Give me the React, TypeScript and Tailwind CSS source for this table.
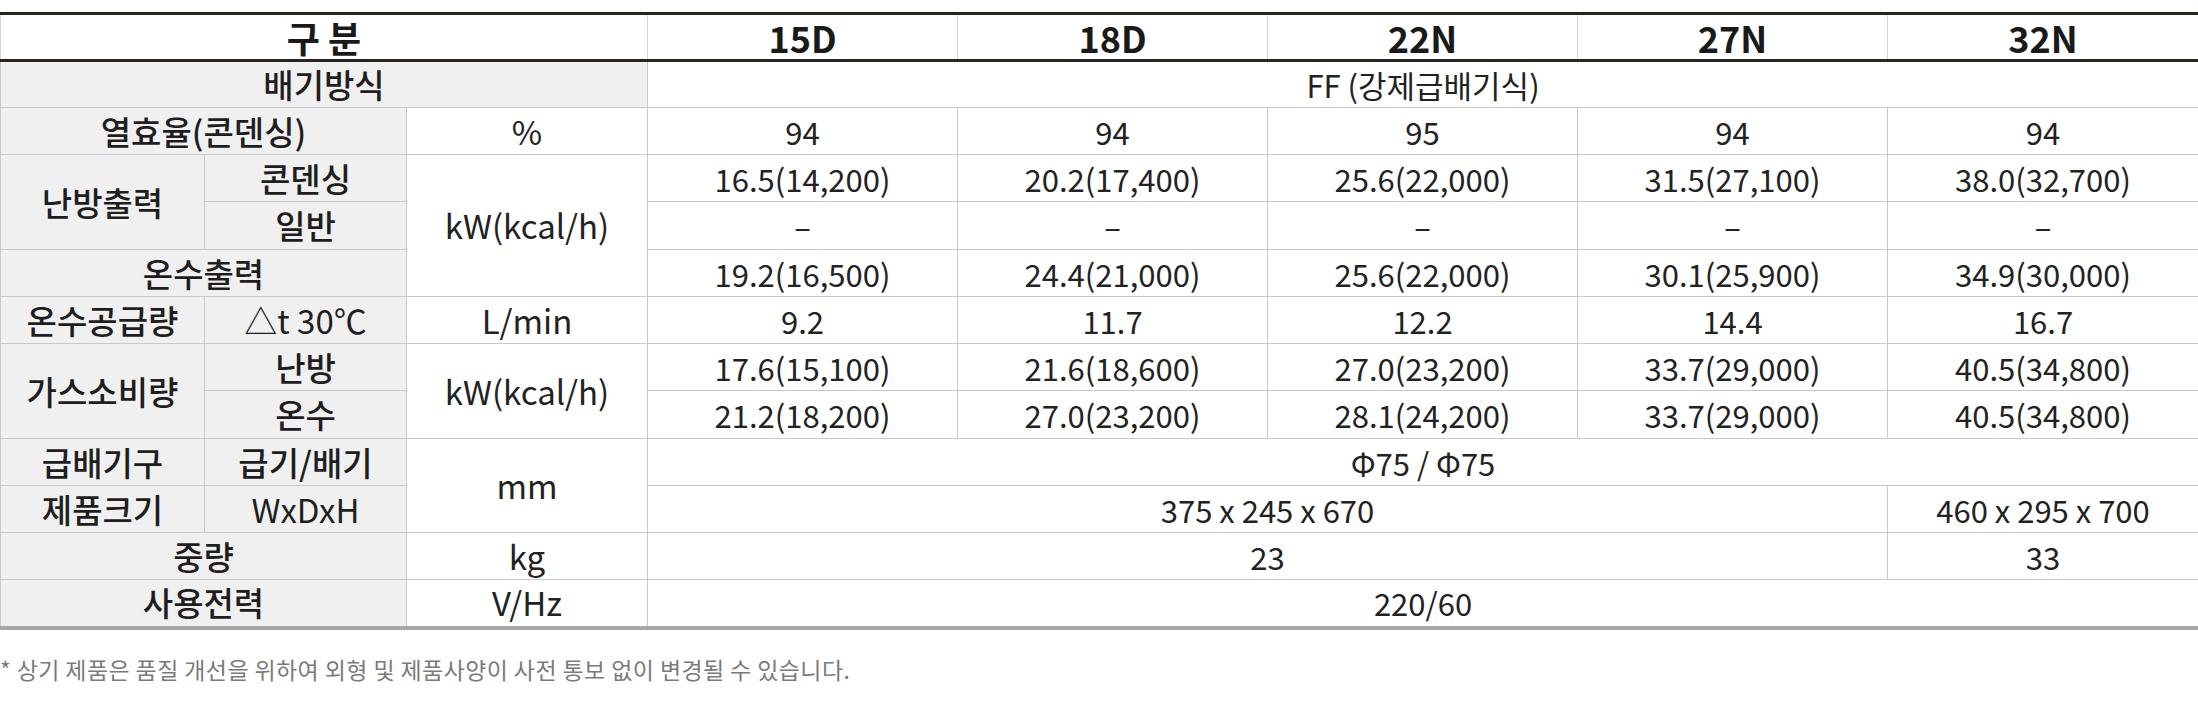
import React from "react";

const L = "bg-[#f0f0f0] border border-[#c9c9c9] text-center align-middle p-0 text-[33px] font-medium text-[#1e1e1e]";
const LN = "bg-[#f0f0f0] border border-[#c9c9c9] text-center align-middle p-0 text-[33px] font-normal text-[#1e1e1e]";
const U = "bg-white border border-[#c9c9c9] text-center align-middle p-0 text-[33px]";
const D = "bg-white border border-[#c9c9c9] text-center align-middle p-0";
const B = " border-b-4 border-b-[#a4a9a7]";

const models = ["15D", "18D", "22N", "27N", "32N"];

export default function App() {
  return (
    <div className="w-[2198px] h-[709px] bg-white font-['Noto_Sans_CJK_KR',sans-serif] text-[#222] overflow-hidden">
      <div className="pt-[12px]">
        <table className="w-[2198px] table-fixed border-collapse text-[31px] leading-none">
          <colgroup>
            <col className="w-[204px]" />
            <col className="w-[202px]" />
            <col className="w-[241px]" />
            <col className="w-[310px]" />
            <col className="w-[310px]" />
            <col className="w-[310px]" />
            <col className="w-[310px]" />
            <col className="w-[311px]" />
          </colgroup>
          <thead>
            <tr className="h-[47px]">
              <th
                colSpan={3}
                className="border-t-[3px] border-b-[3px] border-t-[#2a2520] border-b-[#2a2520] border-x border-x-[#d4d4d4] text-[36px] font-bold text-[#1a1a1a] p-0"
              >
                구 분
              </th>
              {models.map((m) => (
                <th
                  key={m}
                  className="border-t-[3px] border-b-[3px] border-t-[#2a2520] border-b-[#2a2520] border-x border-x-[#d4d4d4] text-[36px] font-bold text-[#1a1a1a] p-0"
                >
                  {m}
                </th>
              ))}
            </tr>
          </thead>
          <tbody>
            <tr className="h-[47px]">
              <td colSpan={3} className={L}>배기방식</td>
              <td colSpan={5} className={D}>FF (강제급배기식)</td>
            </tr>
            <tr className="h-[47px]">
              <td colSpan={2} className={L}>열효율(콘덴싱)</td>
              <td className={U}>%</td>
              {["94", "94", "95", "94", "94"].map((v, i) => (
                <td key={i} className={D}>{v}</td>
              ))}
            </tr>
            <tr className="h-[47px]">
              <td rowSpan={2} className={L}>난방출력</td>
              <td className={L}>콘덴싱</td>
              <td rowSpan={3} className={U}>kW(kcal/h)</td>
              {["16.5(14,200)", "20.2(17,400)", "25.6(22,000)", "31.5(27,100)", "38.0(32,700)"].map((v, i) => (
                <td key={i} className={D}>{v}</td>
              ))}
            </tr>
            <tr className="h-[48px]">
              <td className={L}>일반</td>
              {["–", "–", "–", "–", "–"].map((v, i) => (
                <td key={i} className={D}>{v}</td>
              ))}
            </tr>
            <tr className="h-[47px]">
              <td colSpan={2} className={L}>온수출력</td>
              {["19.2(16,500)", "24.4(21,000)", "25.6(22,000)", "30.1(25,900)", "34.9(30,000)"].map((v, i) => (
                <td key={i} className={D}>{v}</td>
              ))}
            </tr>
            <tr className="h-[47px]">
              <td className={L}>온수공급량</td>
              <td className={LN}>△t 30℃</td>
              <td className={U}>L/min</td>
              {["9.2", "11.7", "12.2", "14.4", "16.7"].map((v, i) => (
                <td key={i} className={D}>{v}</td>
              ))}
            </tr>
            <tr className="h-[47px]">
              <td rowSpan={2} className={L}>가스소비량</td>
              <td className={L}>난방</td>
              <td rowSpan={2} className={U}>kW(kcal/h)</td>
              {["17.6(15,100)", "21.6(18,600)", "27.0(23,200)", "33.7(29,000)", "40.5(34,800)"].map((v, i) => (
                <td key={i} className={D}>{v}</td>
              ))}
            </tr>
            <tr className="h-[48px]">
              <td className={L}>온수</td>
              {["21.2(18,200)", "27.0(23,200)", "28.1(24,200)", "33.7(29,000)", "40.5(34,800)"].map((v, i) => (
                <td key={i} className={D}>{v}</td>
              ))}
            </tr>
            <tr className="h-[47px]">
              <td className={L}>급배기구</td>
              <td className={L}>급기/배기</td>
              <td rowSpan={2} className={U}>mm</td>
              <td colSpan={5} className={D}>Φ75 / Φ75</td>
            </tr>
            <tr className="h-[47px]">
              <td className={L}>제품크기</td>
              <td className={LN}>WxDxH</td>
              <td colSpan={4} className={D}>375 x 245 x 670</td>
              <td className={D}>460 x 295 x 700</td>
            </tr>
            <tr className="h-[47px]">
              <td colSpan={2} className={L}>중량</td>
              <td className={U}>kg</td>
              <td colSpan={4} className={D}>23</td>
              <td className={D}>33</td>
            </tr>
            <tr className="h-[48px]">
              <td colSpan={2} className={L + B}>사용전력</td>
              <td className={U + B}>V/Hz</td>
              <td colSpan={5} className={D + B}>220/60</td>
            </tr>
          </tbody>
        </table>
        <p className="mt-[28px] text-[23px] leading-none tracking-[0.4px] text-[#7a7a7a]">
          * 상기 제품은 품질 개선을 위하여 외형 및 제품사양이 사전 통보 없이 변경될 수 있습니다.
        </p>
      </div>
    </div>
  );
}
